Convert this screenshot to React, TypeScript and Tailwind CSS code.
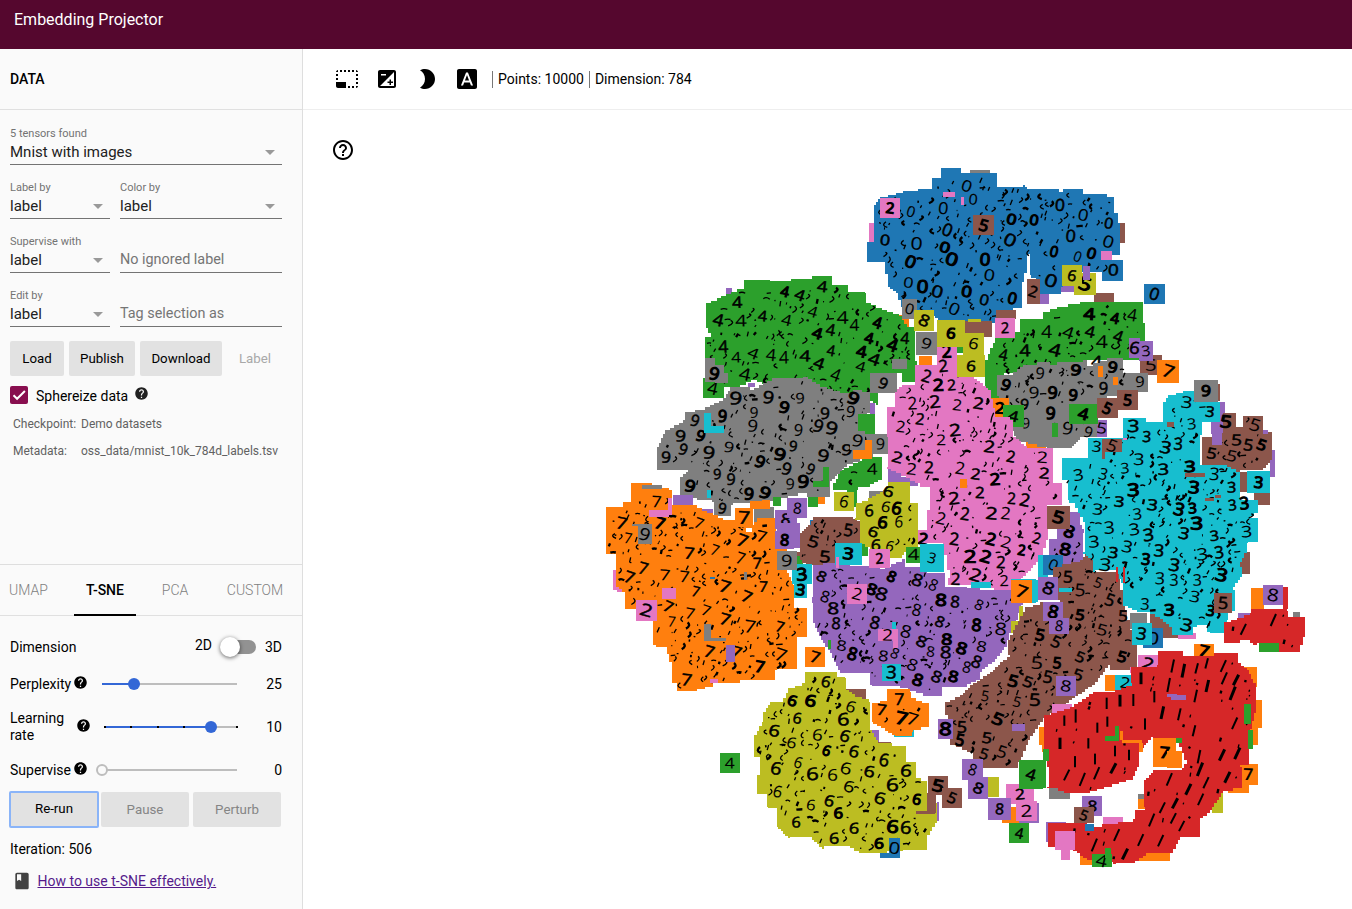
import React from 'react';
import { MdPhotoSizeSelectSmall, MdExposure, MdBrightness2, MdFontDownload, MdHelpOutline, MdHelp, MdBook, MdArrowDropDown } from 'react-icons/md';

const BLUE = '#1f77b4', ORANGE = '#ff7f0e', GREEN = '#2ca02c', RED = '#d62728', PURPLE = '#9467bd';
const BROWN = '#8c564b', PINK = '#e377c2', GRAY = '#7f7f7f', OLIVE = '#bcbd22', CYAN = '#17becf';

type Pt = [number, number];
type Tile = [number, number, number, number, string, string?];
// Each region has its own origin; its inner units are a third of a pixel.
type Region = { x: number; y: number; fill?: string; shape?: string; digit?: string; at?: string; tiles?: Tile[] };

const R: Record<string, Pt> = {
  top: [850, 160], left: [640, 270], west: [600, 470], south: [740, 660], mid: [880, 340],
  east: [1040, 370], core: [780, 480], se: [1010, 580],
};
const reg = (k: string, fill?: string, shape?: string, digit?: string, at?: string, tiles?: Tile[]): Region =>
  ({ x: R[k][0], y: R[k][1], fill, shape, digit, at, tiles });

const regions: Region[] = [
  reg('top', undefined, undefined, undefined, undefined, [
    [360, 30, 60, 20, GRAY], [58, 190, 40, 60, PINK], [780, 190, 45, 58, BROWN], [545, 370, 52, 62, PURPLE],
    [632, 350, 40, 45, PURPLE], [148, 465, 30, 38, ORANGE], [732, 400, 60, 30, BROWN],
  ]),
  reg('top', BLUE, '273,24 333,24 333,40 432,40 440,80 518,76 530,88 628,96 640,88 698,88 700,103 770,112 792,120 792,160 804,160 804,188 810,190 810,284 785,284 785,300 818,300 818,362 757,362 757,337 650,337 632,402 570,402 570,360 543,345 540,283 536,283 530,340 516,390 515,445 490,455 435,490 275,488 250,460 200,455 160,440 145,400 120,380 105,305 52,305 52,247 72,247 72,135 90,110 160,92 246,80 246,55 273,52', '0',
    '350,78 183,155 280,145 370,118 292,210 485,178 552,180 630,135 700,165 776,190 775,245 662,228 725,280 683,290 612,275 480,240 105,240 200,250 285,262 182,305 305,298 405,298 418,345 175,368 218,380 262,395 350,395 403,420 487,415 313,447 603,362 790,330',
    [[90, 114, 60, 60, PINK, '2'], [370, 166, 62, 60, BROWN, '5'], [280, 96, 36, 16, PINK], [333, 110, 9, 24, PINK], [754, 274, 32, 26, PINK],
      [672, 340, 66, 64, OLIVE, '5'], [700, 318, 20, 42, PURPLE], [636, 316, 60, 62, OLIVE, '6'], [530, 358, 40, 73, BROWN, '2'], [882, 372, 62, 60, BLUE, '0']]),
  reg('left', undefined, undefined, undefined, undefined, [[258, 54, 18, 20, PURPLE], [775, 138, 25, 34, ORANGE], [690, 400, 15, 40, PURPLE], [325, 340, 20, 12, PURPLE]]),
  reg('left', GREEN, '198,100 230,85 272,65 312,48 312,30 390,33 515,18 575,18 575,45 625,50 625,65 675,70 678,100 740,125 778,138 800,172 824,175 824,272 830,290 840,335 786,335 786,310 690,320 718,370 715,405 690,385 580,375 500,340 400,350 350,330 300,352 252,352 252,383 190,383 190,325 205,325 195,290 195,200 212,190 198,160', '4',
    '292,97 435,65 480,75 547,50 235,150 303,152 368,138 440,150 608,143 643,165 712,158 518,125 532,190 572,180 687,205 250,230 340,250 288,262 393,255 432,262 495,258 573,242 537,280 662,290 703,268 587,315 315,313 218,355 758,225 665,245 795,205'),
  reg('left', GREEN, '580,640 600,600 680,560 725,555 725,630 690,650 655,660 650,700 630,700 630,660 580,658', '4', '697,597', [[620, 650, 30, 60, GREEN]]),
  reg('left', GRAY, '195,412 250,385 270,350 330,360 395,325 490,320 540,350 600,370 640,360 690,372 690,430 680,470 700,500 700,560 620,590 570,640 570,680 500,670 390,700 300,700 240,718 215,690 125,675 120,620 145,600 50,595 50,530 75,480 130,450 135,425', '9',
    '287,385 385,382 480,385 433,412 342,428 248,438 555,430 632,425 640,385 122,498 182,498 78,562 207,548 267,532 360,575 460,528 420,553 550,557 620,540 575,475 535,468 475,480 165,452 150,648 273,628 232,612 327,672 375,668 450,642 490,635 440,597 512,598 130,538 338,468',
    [[195, 265, 30, 72, GRAY], [225, 308, 38, 30, GRAY], [195, 285, 56, 52, GRAY, '9'], [655, 433, 50, 60, GREEN], [690, 310, 80, 60, GRAY, '9'], [192, 430, 22, 58, CYAN], [192, 468, 60, 20, CYAN], [640, 510, 55, 56, ORANGE], [630, 484, 45, 56, GRAY, '9'], [697, 492, 48, 60, GRAY, '9'], [756, 268, 44, 28, GRAY], [520, 632, 45, 18, GREEN], [550, 590, 16, 60, GREEN], [365, 690, 25, 22, ORANGE], [200, 660, 12, 24, CYAN], [400, 680, 22, 28, GREEN], [505, 680, 28, 32, GREEN], [535, 680, 20, 22, ORANGE], [688, 662, 40, 30, GRAY]]),
  reg('west', undefined, undefined, undefined, undefined, [[218, 75, 60, 60, PURPLE], [285, 117, 55, 35, PURPLE], [38, 300, 30, 60, PINK], [50, 350, 38, 15, PINK], [560, 330, 14, 36, PINK], [342, 92, 50, 46, GRAY, '9'], [462, 112, 60, 50, GRAY], [450, 92, 60, 25, ORANGE]]),
  reg('west', ORANGE, '93,38 155,38 155,55 208,60 215,105 290,115 370,150 455,165 470,145 523,145 528,235 560,240 560,310 580,345 582,415 620,415 620,500 590,510 590,597 530,600 525,630 420,640 340,650 290,662 232,662 232,640 213,640 215,575 200,530 168,525 160,450 110,418 75,418 75,365 48,345 48,253 18,253 18,112 70,112 70,95 93,90', '7',
    '170,95 65,160 180,160 297,160 84,205 485,200 427,212 268,250 345,240 422,265 472,280 130,295 195,315 253,320 88,322 375,350 490,350 440,380 287,365 205,410 270,430 318,422 215,455 375,448 450,470 540,470 328,545 542,555 410,545 480,590 260,630',
    [[113, 165, 42, 56, GRAY, '9'], [96, 162, 60, 6, GRAY], [108, 390, 62, 62, PINK, '2'], [185, 353, 42, 35, PINK], [126, 45, 60, 12, GRAY], [148, 120, 58, 20, PINK], [205, 84, 12, 50, PINK], [404, 115, 56, 56, ORANGE, '7'], [437, 175, 18, 11, '#ffffff'], [312, 462, 20, 50, GRAY], [312, 505, 66, 8, GRAY], [378, 525, 26, 52, PURPLE], [330, 322, 14, 5, BLUE], [330, 628, 24, 12, PINK], [431, 306, 10, 24, GRAY], [616, 532, 58, 58, ORANGE, '7']]),
  reg('west', undefined, undefined, undefined, undefined, [[525, 120, 65, 56, PURPLE, '8'], [530, 160, 70, 75, PURPLE], [525, 184, 58, 52, PURPLE, '8'], [562, 85, 60, 60, PURPLE, '8'], [590, 250, 20, 35, GREEN], [630, 150, 20, 20, BLUE], [780, 214, 25, 45, GREEN]]),
  reg('west', BROWN, '640,142 750,142 780,160 780,240 700,285 630,285 605,270 592,245 600,190 625,165', '5', '640,215 745,180 675,260'),
  reg('top', GREEN, '580,455 620,440 690,425 880,425 880,490 885,545 870,600 760,600 700,600 700,640 440,650 440,700 408,700 405,600 435,530 510,510 510,478 580,475', '4',
    '590,515 655,518 720,515 718,462 795,475 755,545 460,585 525,572 615,570 740,605 847,465 805,530',
    [[870, 586, 65, 58, BROWN, '5'], [868, 544, 40, 58, PURPLE, '3'], [838, 534, 32, 60, PURPLE, '6'], [922, 600, 65, 68, ORANGE, '7']]),
  reg('mid', undefined, undefined, undefined, undefined, [[318, 80, 55, 108, GREEN], [650, 240, 30, 50, PURPLE, '5'], [438, 305, 60, 25, ORANGE], [24, 382, 40, 52, PURPLE], [64, 410, 50, 28, PURPLE]]),
  reg('mid', GRAY, '350,105 400,95 430,75 470,65 510,75 530,65 610,60 620,78 680,55 730,55 730,100 805,105 805,155 745,160 650,180 650,290 600,300 575,325 500,320 415,300 395,260 395,210 370,180 350,160', '9',
    '378,135 480,100 588,90 518,158 670,145 698,82 433,193 438,250 512,220 563,265 625,277 780,125 580,165 462,158',
    [[332, 175, 56, 58, ORANGE, '2'], [368, 195, 65, 67, GREEN, '4'], [568, 192, 85, 60, GREEN, '4'], [516, 250, 18, 42, GREEN], [650, 175, 64, 60, BROWN, '5'], [712, 150, 62, 60, BROWN, '5'], [654, 78, 14, 32, ORANGE], [698, 112, 16, 24, ORANGE]]),
  reg('mid', PINK, '170,20 228,20 232,90 262,105 300,130 325,150 345,230 390,240 400,290 440,325 518,330 520,430 545,433 545,495 500,500 503,600 490,650 445,700 400,740 395,750 290,735 195,735 210,690 200,645 190,610 105,620 103,570 140,560 140,510 150,470 150,440 120,430 62,400 20,380 25,290 22,200 45,190 45,155 65,135 105,130 105,75 170,65', '2',
    '190,78 200,35 140,108 175,135 215,135 97,190 165,185 232,195 295,190 62,260 120,237 225,270 183,300 328,320 393,350 487,352 493,400 52,352 95,387 147,382 240,385 287,402 345,418 222,475 300,458 395,475 435,480 183,535 255,522 377,520 335,520 223,597 333,597 378,607 470,595 270,650 317,650 363,667 425,630 287,705 227,717 372,722 130,597',
    [[240, 418, 22, 26, ORANGE], [118, 48, 38, 26, ORANGE]]),
  reg('top', undefined, undefined, undefined, undefined, [[156, 418, 45, 58, GRAY, '0'], [193, 450, 60, 63, OLIVE, '8'], [345, 484, 80, 46, BROWN], [437, 450, 60, 28, BROWN], [320, 540, 30, 40, GREEN], [262, 480, 82, 80, OLIVE, '6'], [198, 516, 62, 70, GRAY, '9'], [340, 518, 62, 66, OLIVE, '6'], [435, 474, 60, 59, PINK, '2'], [322, 586, 83, 64, OLIVE, '6'], [354, 477, 40, 9, OLIVE]]),
  reg('core', OLIVE, '325,5 390,12 390,70 413,72 413,205 380,215 365,235 300,225 270,200 240,185 240,120 225,115 228,70 265,55 310,30', '6',
    '325,35 350,85 318,80 267,92 357,125 308,127 280,155 330,198 288,195'),
  reg('core', PURPLE, '100,255 130,250 210,258 300,268 365,238 375,262 420,262 440,280 495,285 495,320 560,325 600,330 692,328 692,365 728,375 715,420 695,460 680,500 645,545 605,575 600,600 560,620 486,625 486,648 430,640 360,618 275,615 270,580 180,570 155,520 130,480 105,430 100,370 95,350', '8',
    '335,290 125,290 412,300 460,315 135,350 275,328 305,342 160,385 410,390 483,360 525,365 597,375 168,430 285,428 480,425 590,435 662,447 378,455 425,485 500,478 605,500 545,505 452,515 497,517 185,497 217,522 310,528 345,520 397,555 413,600 470,590 520,590 590,545 560,562',
    [[202, 312, 58, 60, PINK, '2'], [293, 447, 60, 36, PINK, '2'], [338, 480, 15, 25, PINK], [335, 427, 12, 20, CYAN], [306, 552, 56, 50, CYAN, '3'], [144, 480, 8, 26, GREEN], [718, 378, 12, 65, OLIVE], [694, 424, 24, 36, OLIVE], [378, 200, 45, 48, GREEN, '4'], [420, 192, 72, 84, CYAN, '3'], [574, 305, 60, 18, CYAN], [163, 36, 58, 58, OLIVE, '6'], [36, 253, 60, 60, CYAN, '3'], [42, 306, 40, 47, CYAN, '3'], [165, 188, 80, 66, CYAN, '3'], [267, 208, 62, 55, PINK, '2'], [-10, 213, 60, 58, GRAY, '9'], [168, 230, 8, 35, PINK]]),
  reg('east', undefined, undefined, undefined, undefined, [[530, 42, 10, 50, BROWN], [535, 95, 20, 60, PURPLE], [690, 240, 14, 80, PURPLE], [600, 546, 30, 66, BROWN], [535, 660, 50, 62, CYAN], [642, 370, 48, 36, BROWN], [595, 305, 40, 60, BROWN], [-5, 555, 30, 70, CYAN], [512, 155, 60, 36, PURPLE], [330, 710, 85, 95, BROWN], [414, 790, 54, 16, PINK], [270, 728, 50, 50, GRAY]]),
  reg('east', PURPLE, '90,425 120,425 120,465 132,490 130,585 70,590 28,570 28,508 50,500 52,470 90,465', '8', '88,485 76,538', [[10, 555, 60, 60, BLUE, '0'], [22, 408, 67, 68, BROWN, '5']]),
  { x: 0, y: 0, fill: BROWN, digit: '5',
    shape: '3075,1821 3120,1806 3180,1800 3160,1700 3240,1680 3264,1650 3282,1650 3285,1716 3351,1710 3360,1770 3375,1830 3396,1920 3408,1935 3411,2010 3330,2010 3330,1995 3285,2055 3225,2094 3180,2130 3135,2154 3090,2220 3084,2235 3054,2304 2925,2304 2919,2256 2850,2226 2850,2184 2835,2106 2880,2085 2910,2055 2970,2016 3000,1986 3030,1965 3024,1920 3045,1875',
    at: '3120,1905 3168,1926 3111,1989 3171,1989 3144,2031 3084,2046 3039,2043 2955,2088 3051,2106 3105,2100 2994,2157 2886,2181 2880,2220 2961,2214 3006,2256 2952,2262 3294,1749 3240,1770 3204,1731 3330,1800 3240,1845 3306,1890 3369,1848 3240,1971 3366,1971 3234,2025' },
  reg('east', CYAN, '385,75 430,62 475,65 475,95 540,95 540,155 490,155 487,195 480,285 560,285 600,305 600,390 655,390 655,430 630,445 655,455 655,515 625,520 620,550 600,590 605,620 580,660 565,750 560,790 510,785 500,765 470,770 460,795 400,795 395,770 360,740 330,725 290,720 250,700 250,640 230,600 165,605 160,570 130,545 135,455 105,400 88,390 85,330 66,330 66,265 125,265 145,260 145,203 250,205 250,145 315,145 318,155 370,150 370,95', '3',
    '440,97 510,125 455,162 280,168 320,200 415,222 377,232 170,230 297,268 255,295 190,312 115,315 370,298 450,290 523,312 462,352 280,360 238,395 575,352 577,405 173,418 337,405 292,432 418,418 458,415 613,400 432,490 208,473 283,478 325,495 620,485 523,497 470,460 162,515 220,548 262,530 318,568 357,542 487,553 537,547 403,585 545,615 195,585 360,625 472,630 402,630 315,702 465,680 512,722 388,720 440,765',
    [[187, 208, 58, 38, BROWN, '5'], [187, 246, 9, 20, BROWN], [382, 157, 20, 14, BROWN], [435, 309, 60, 12, BROWN], [495, 383, 28, 11, BROWN], [525, 375, 18, 9, BROWN], [250, 204, 11, 6, PINK], [228, 592, 6, 44, RED], [250, 592, 5, 48, RED], [463, 30, 70, 65, GRAY, '9'], [310, 775, 58, 60, BLUE, '0'], [275, 758, 60, 66, CYAN, '3'], [523, 668, 52, 62, BROWN, '5']]),
  reg('east', BROWN, '548,130 585,130 587,170 610,170 610,138 668,138 670,185 697,195 697,270 670,300 600,305 560,285 490,285 485,200 545,190', '5', '558,155 645,165 590,210 625,225 665,225 515,250 575,258',
    [[516, 190, 30, 34, PURPLE], [670, 180, 14, 12, PURPLE], [622, 304, 68, 66, CYAN, '3']]),
  reg('se', undefined, undefined, undefined, undefined, [[722, 24, 40, 66, ORANGE], [820, 22, 13, 66, RED], [553, 192, 58, 40, ORANGE, '7'], [700, 262, 40, 60, ORANGE], [718, 360, 38, 84, ORANGE], [715, 440, 30, 56, ORANGE], [685, 553, 60, 62, ORANGE, '7'], [655, 600, 62, 40, ORANGE], [88, 440, 30, 56, ORANGE], [97, 495, 20, 22, ORANGE], [28, 540, 80, 85, GREEN, '4'], [118, 598, 62, 60, GRAY], [384, 224, 60, 55, PINK, '2'], [360, 262, 10, 18, PINK], [286, 286, 40, 46, ORANGE], [316, 286, 60, 44, CYAN, '2'], [126, 373, 60, 40, PINK], [605, 640, 33, 58, OLIVE], [384, 642, 20, 45, GRAY], [384, 656, 22, 30, ORANGE], [108, 727, 60, 58, PURPLE], [280, 710, 58, 25, PINK], [210, 820, 40, 36, ORANGE], [384, 810, 96, 32, ORANGE], [685, 100, 40, 30, PURPLE], [850, 97, 20, 20, GRAY], [748, 185, 60, 30, GREEN]]),
  reg('se', RED, '445,213 510,213 520,228 555,228 612,220 683,220 685,250 710,270 730,310 738,360 738,400 720,470 718,555 690,560 695,625 640,640 600,700 570,720 570,772 510,780 490,820 420,820 375,850 318,852 300,840 240,840 180,800 115,790 115,730 180,730 230,740 370,718 375,690 405,680 402,600 430,570 515,565 530,540 515,500 500,475 430,470 415,490 388,515 388,560 370,600 240,640 180,640 145,625 110,620 118,560 102,490 102,405 180,380 250,335 315,330 365,310 362,260 440,255', '1',
    '488,258 520,272 560,265 590,250 640,258 643,295 678,300 393,295 476,315 592,318 668,340 330,362 370,360 290,370 557,348 433,350 457,398 508,403 163,422 197,408 262,443 292,425 405,432 552,452 674,430 235,490 150,490 315,513 357,525 567,530 636,525 682,520 195,545 255,537 310,565 260,580 170,585 217,598 570,568 652,592 478,598 588,608 572,658 535,628 495,670 457,683 425,720 490,715 515,738 320,765 392,780 452,782 253,795 345,822',
    [[472, 342, 30, 9, PURPLE], [484, 346, 44, 15, PURPLE], [286, 468, 40, 16, GREEN], [316, 438, 11, 46, GREEN], [330, 454, 9, 25, ORANGE], [335, 479, 62, 10, ORANGE], [388, 488, 10, 28, ORANGE], [466, 475, 50, 15, GREEN], [430, 475, 68, 86, ORANGE, '7'], [470, 512, 46, 52, ORANGE], [702, 372, 20, 60, GREEN], [715, 450, 14, 56, GREEN], [100, 508, 16, 35, GREEN], [135, 753, 60, 56, PINK], [153, 780, 28, 60, PINK], [225, 732, 26, 20, BLUE], [245, 822, 60, 40, GREEN, '4'], [285, 804, 18, 30, GREEN], [217, 648, 60, 60, PURPLE, '8'], [193, 682, 58, 48, BROWN, '5']]),
  reg('se', RED, '642,125 720,100 722,88 830,92 835,110 887,110 885,170 870,217 810,215 808,190 740,195 720,180 690,188 642,188', '1', '700,148 790,120', [[748, 195, 60, 20, GREEN], [760, 15, 58, 60, PURPLE, '8']]),
  reg('south', undefined, undefined, undefined, undefined, [[318, 88, 60, 82, BROWN], [385, 210, 32, 35, PURPLE], [400, 246, 52, 58, BROWN], [485, 298, 14, 10, PINK], [590, 425, 7, 58, PURPLE], [462, 200, 60, 30, CYAN]]),
  reg('south', OLIVE, '195,35 285,35 290,50 315,55 318,90 345,110 388,125 390,210 415,250 497,265 497,305 527,305 527,355 560,370 560,430 592,440 592,490 570,525 560,570 490,572 440,580 370,580 330,558 253,567 215,532 150,535 115,500 110,445 85,440 80,403 52,400 52,345 60,290 42,285 42,225 65,185 70,155 90,125 130,115 145,85 185,70', '6',
    '258,65 157,122 212,122 172,175 103,212 232,225 310,178 155,248 260,272 342,275 315,228 108,325 175,308 217,342 318,325 278,345 388,335 432,300 498,332 327,380 457,375 420,415 530,418 113,395 213,435 268,422 295,460 168,487 342,505 458,500 497,503 282,535 417,550 333,140',
    [[528, 454, 58, 7, BROWN], [560, 400, 28, 60, BROWN], [565, 348, 58, 58, BROWN, '5'], [606, 385, 60, 58, BROWN, '5'], [447, 534, 32, 60, BLUE, '0'], [420, 580, 30, 14, BLUE], [-61, 280, 60, 60, GREEN, '4'], [594, 178, 45, 58, PURPLE, '8'], [667, 298, 62, 62, PURPLE, '8'], [745, 352, 32, 58, OLIVE], [685, 352, 60, 66, PURPLE, '8'], [798, 373, 84, 60, PINK, '2'], [786, 440, 60, 48, ORANGE], [836, 430, 60, 58, PURPLE], [745, 415, 68, 64, PURPLE, '8'], [828, 424, 62, 58, PINK, '2'], [808, 490, 60, 60, GREEN, '4'], [838, 302, 70, 84, GREEN, '4'], [817, 193, 37, 20, PURPLE]]),
  reg('south', ORANGE, '440,88 510,95 512,115 545,130 567,140 567,202 520,215 515,228 465,225 435,205 400,185 397,130 440,115', '7', '425,150 478,118 485,175 517,178'),
  reg('core', undefined, undefined, undefined, undefined, [[750, 300, 25, 65, CYAN], [692, 298, 75, 72, CYAN], [694, 300, 62, 70, ORANGE, '7'], [775, 290, 60, 70, PURPLE, '8'], [836, 325, 40, 10, CYAN], [790, 367, 60, 56, PURPLE, '8'], [808, 415, 58, 46, PURPLE, '8'], [829, 588, 58, 60, PURPLE, '8']]),
];

function rng(seed: number) {
  let s = seed;
  return () => { s = (s * 1664525 + 1013904223) % 4294967296; return s / 4294967296; };
}
const parse = (s: string): Pt[] => s.split(' ').map(p => p.split(',').map(Number) as Pt);

function inside(x: number, y: number, p: Pt[]) {
  let r = false;
  for (let i = 0, j = p.length - 1; i < p.length; j = i++) {
    if ((p[i][1] > y) !== (p[j][1] > y) && x < ((p[j][0] - p[i][0]) * (y - p[i][1])) / (p[j][1] - p[i][1]) + p[i][0]) r = !r;
  }
  return r;
}

function stair(p: Pt[]) {
  let d = `M${p[0][0]} ${p[0][1]}`;
  p.forEach((a, i) => {
    const b = p[(i + 1) % p.length];
    const n = Math.max(1, Math.round(Math.min(Math.abs(b[0] - a[0]), Math.abs(b[1] - a[1])) / 7));
    for (let k = 1; k <= n; k++) {
      d += `H${Math.round(a[0] + ((b[0] - a[0]) * k) / n)}V${Math.round(a[1] + ((b[1] - a[1]) * k) / n)}`;
    }
  });
  return d + 'Z';
}

const lean: Record<string, number> = { '0': 14, '2': 6, '3': 4, '4': 10, '5': 12, '6': 10, '7': 12, '8': 12, '9': 10 };

function Digit({ x, y, d, r }: { x: number; y: number; d: string; r: () => number }) {
  const turn = lean[d] + r() * 24 - 12, size = 43 + r() * 10, weight = r();
  if (d === '1') {
    const h = 15 + r() * 6, k = x > 600 || y > 560 ? 8 : x > 450 ? 4 : 0;
    return <path d={`M${x + k} ${y - h}L${x - k} ${y + h}`} stroke="#000" strokeWidth={weight > 0.7 ? 9 : 6} />;
  }
  return (
    <text transform={`translate(${x} ${y}) rotate(${turn}) scale(${0.95 + r() * 0.35} 1)`} y={size * 0.35} textAnchor="middle" fontSize={size} stroke="#000" strokeWidth={weight > 0.75 ? 3.5 : weight > 0.35 ? 1.6 : 0.3}>{d}</text>
  );
}

function Cluster({ g, i }: { g: Region; i: number }) {
  const r = rng(i * 977 + 13);
  const poly = g.shape ? parse(g.shape) : [];
  const pts = g.at ? parse(g.at) : [];
  const fine: string[] = [], heavy: string[] = [];
  if (poly.length) {
    const xs = poly.map(p => p[0]), ys = poly.map(p => p[1]);
    const x0 = Math.min(...xs), x1 = Math.max(...xs), y0 = Math.min(...ys), y1 = Math.max(...ys);
    for (let y = y0 + 10; y < y1; y += 20) {
      for (let x = x0 + 10; x < x1; x += 21) {
        const a = Math.round(x + r() * 24 - 12), b = Math.round(y + r() * 22 - 11), q = r(), u = r(), v = r(), w = r();
        if (q > (g.digit === '1' ? 0.2 : 0.5) || !inside(a, b, poly) || !inside(a + 12, b + 12, poly) || !inside(a - 12, b - 12, poly)) continue;
        if (pts.some(p => Math.abs(p[0] - a) < 22 && Math.abs(p[1] - b) < 27)) continue;
        const out = w > 0.72 ? heavy : fine;
        if (g.digit === '1') out.push(`M${a} ${b}l${-1 - u * 3} ${4 + v * 9}`);
        else if (q < 0.13) out.push(`M${a} ${b}l${2 + u * 4} ${-1 + v * 3}`);
        else if (q < 0.27) out.push(`M${a} ${b - 6}l${-2 - u * 5} ${6 + v * 10}`);
        else if (q < 0.34) out.push(`M${a - 8} ${b}q${4 + u * 6} ${-7 * v} ${12 + u * 8} ${-2 + v * 4}`);
        else if (q < 0.42) out.push(`M${a} ${b - 8}q${8 + u * 7} ${2 + v * 8} ${-3 - u * 5} ${12 + v * 7}`);
        else out.push(`M${a + 4} ${b - 7}q${-12 - u * 4} ${4 + v * 8} ${-1 + u * 5} ${12 + v * 5}`);
      }
    }
  }
  return (
    <g transform={`translate(${g.x} ${g.y}) scale(0.333333)`}>
      {poly.length > 0 && <path d={stair(poly)} fill={g.fill} shapeRendering="crispEdges" />}
      <path d={fine.join('')} fill="none" stroke="#000" strokeWidth="4" />
      <path d={heavy.join('')} fill="none" stroke="#000" strokeWidth="7" />
      {pts.map((p, k) => <Digit key={k} x={p[0]} y={p[1]} d={g.digit!} r={r} />)}
      {g.tiles?.map((t, k) => (
        <g key={`t${k}`}>
          <rect x={t[0]} y={t[1]} width={t[2]} height={t[3]} fill={t[4]} shapeRendering="crispEdges" />
          {t[5] && <Digit x={t[0] + t[2] / 2} y={t[1] + t[3] / 2} d={t[5]} r={r} />}
        </g>
      ))}
    </g>
  );
}

function Select({ label, value, className }: { label: string; value: string; className: string }) {
  return (
    <div className={`flex h-[54px] flex-col justify-end border-b border-[#737373] ${className}`}>
      <span className="text-[11px] leading-3 text-[#737373]">{label}</span>
      <div className="flex h-6 items-center justify-between pb-px text-[15px] leading-6 text-[#212121]">
        <span className="whitespace-nowrap">{value}</span>
        <MdArrowDropDown className="size-6 text-[#999]" />
      </div>
    </div>
  );
}

function Field({ text }: { text: string }) {
  return <div className="flex h-[54px] w-[162px] items-end border-b border-[#737373] pb-[2px] text-[14.4px] leading-[20px] text-[#757575]">{text}</div>;
}

function Slider({ at, dots, className }: { at: number; dots?: boolean; className: string }) {
  return (
    <div className={`relative flex h-4 items-center ${className}`}>
      <div className="h-0.5 w-full bg-[#bdbdbd]" />
      <div className="absolute left-0 h-0.5 bg-[#3367d6]" style={{ width: at }} />
      {dots && <div className="absolute inset-x-0 flex justify-between">{[0, 1, 2, 3, 4, 5].map(k => <i key={k} className="size-0.5 bg-black" />)}</div>}
      <div className={at ? 'absolute size-3 -translate-x-1/2 rounded-full bg-[#3367d6]' : 'absolute size-3 -translate-x-1/2 rounded-full border-2 border-[#bdbdbd] bg-[#fafafa]'} style={{ left: at }} />
    </div>
  );
}

export default function App() {
  return (
    <div className="flex h-[909px] w-[1352px] flex-col overflow-hidden bg-white font-['Roboto',sans-serif] text-sm text-black">
      <header className="h-[49px] shrink-0 bg-[#55072e] pl-[14px] pt-2 text-base leading-6 text-white">Embedding Projector</header>
      <div className="flex min-h-0 flex-1">
        <aside className="flex w-[303px] shrink-0 flex-col border-r border-[#dedede] bg-[#fafafa]">
          <h2 className="flex h-[61px] shrink-0 items-center border-b border-[#e0e0e0] pl-[10px] text-sm font-medium">DATA</h2>
          <div className="flex flex-col px-[10px] pt-px">
            <Select label="5 tensors found" value="Mnist with images" className="w-[272px]" />
            <div className="flex gap-[10px]"><Select label="Label by" value="label" className="w-[100px]" /><Select label="Color by" value="label" className="w-[162px]" /></div>
            <div className="flex gap-[10px]"><Select label="Supervise with" value="label" className="w-[100px]" /><Field text="No ignored label" /></div>
            <div className="flex gap-[10px]"><Select label="Edit by" value="label" className="w-[100px]" /><Field text="Tag selection as" /></div>
            <div className="mt-[14px] flex h-[35px] gap-[5px] text-[13.3px]">
              <button className="w-[54px] rounded-xs bg-[#e2e2e2] pt-px">Load</button>
              <button className="w-[66px] rounded-xs bg-[#e2e2e2] pt-px">Publish</button>
              <button className="w-[82px] rounded-xs bg-[#e2e2e2] pt-px">Download</button>
              <button className="w-[56px] pt-px text-[#a8a8a8]">Label</button>
            </div>
            <div className="mt-[10px] flex h-[18px] items-center">
              <span className="flex size-[18px] items-center justify-center rounded-xs bg-[#880e4f]"><svg viewBox="0 0 18 18" className="size-[18px]" fill="none" stroke="white" strokeWidth="2"><path d="M3.5 9.2l3.6 3.6 7.8-7.8" /></svg></span>
              <span className="ml-2 w-[92px] whitespace-nowrap pt-px text-sm">Sphereize data</span>
              <MdHelp className="mb-[3px] ml-[6px] size-[15px] text-[#212121]" />
            </div>
            <div className="mt-[12px] flex h-4 items-center pl-[3px] text-xs text-[#616161]"><span className="w-[68px]">Checkpoint:</span><span>Demo datasets</span></div>
            <div className="mt-[11px] flex h-4 items-center pl-[3px] text-xs text-[#616161]"><span className="w-[68px]">Metadata:</span><span>oss_data/mnist_10k_784d_labels.tsv</span></div>
          </div>
          <div className="mt-auto h-[345px] border-t border-[#dedede]">
            <div className="flex h-[51px] border-b border-[#e0e0e0] font-light text-[#808080]">
              <span className="flex w-[74px] items-center pl-[9px]">UMAP</span>
              <span className="flex h-[51px] w-[62px] items-center justify-center border-b-2 border-black font-medium text-black">T-SNE</span>
              <span className="flex w-[78px] items-center justify-center">PCA</span>
              <span className="flex w-[82px] items-center justify-center">CUSTOM</span>
            </div>
            <div className="pl-[10px] pr-5">
              <div className="mt-[21px] flex h-5 items-center">
                <span className="w-[185px]">Dimension</span><span className="mb-1">2D</span>
                <div className="relative ml-2 flex h-5 w-[36px] items-center"><div className="ml-1 h-[14px] w-[32px] rounded-full bg-[#929292]" /><div className="absolute left-0 size-5 rounded-full bg-white shadow-[0_1px_4px_rgba(0,0,0,0.6)]" /></div>
                <span className="ml-auto">3D</span>
              </div>
              <div className="mt-[17px] flex h-5 items-center"><span className="w-[63px]">Perplexity</span><MdHelp className="mb-[3px] size-[15px]" /><Slider at={32} className="ml-[14px] w-[135px]" /><span className="ml-auto">25</span></div>
              <div className="mt-[16px] flex h-[34px] items-center"><span className="w-[66px] leading-[17px]">Learning<br />rate</span><MdHelp className="mb-[3px] size-[15px]" /><Slider at={107} dots className="ml-[13px] w-[134px]" /><span className="ml-auto">10</span></div>
              <div className="mt-[16px] flex h-5 items-center"><span className="w-[63px]">Supervise</span><MdHelp className="mb-[3px] size-[15px]" /><Slider at={0} className="ml-[14px] w-[135px]" /><span className="ml-auto">0</span></div>
              <div className="-ml-px mt-[11px] flex h-[37px] items-center text-[13.3px]">
                <button className="h-[37px] w-[90px] shrink-0 rounded-xs border-2 border-[#8ab4f8] bg-[#e2e2e2]">Re-run</button>
                <button className="ml-[2px] h-[35px] w-[88px] shrink-0 rounded-xs bg-[#e2e2e2] pt-px text-[#858585]">Pause</button>
                <button className="ml-[4px] h-[35px] w-[88px] shrink-0 rounded-xs bg-[#e2e2e2] pt-px text-[#858585]">Perturb</button>
              </div>
              <div className="mt-[11px] h-5 leading-5">Iteration: 506</div>
              <div className="mt-[12px] flex h-5 items-center pl-[2px]"><MdBook className="size-5 text-[#424242]" /><span className="ml-[5.5px] text-[#551a8b] underline">How to use t-SNE effectively.</span></div>
            </div>
          </div>
        </aside>
        <main className="relative flex-1">
          <div className="flex h-[61px] items-center border-b border-[#eee] pl-[32px]">
            <MdPhotoSizeSelectSmall className="size-6" /><MdExposure className="ml-4 size-6" /><MdBrightness2 className="ml-4 size-6" /><MdFontDownload className="ml-4 size-6" />
            <div className="ml-[13px] flex h-[17px] items-center border-l border-[#777] pl-[5px]">Points: 10000</div>
            <div className="ml-[5px] flex h-[17px] items-center border-l border-[#777] pl-[5px]">Dimension: 784</div>
          </div>
          <MdHelpOutline className="ml-[28px] mt-[28px] size-6" />
          <svg className="absolute -left-[303px] -top-[49px] h-[909px] w-[1352px]" viewBox="0 0 1352 909" fontFamily="'Open Sans', sans-serif">
            {regions.map((g, i) => <Cluster key={i} g={g} i={i} />)}
          </svg>
        </main>
      </div>
    </div>
  );
}
